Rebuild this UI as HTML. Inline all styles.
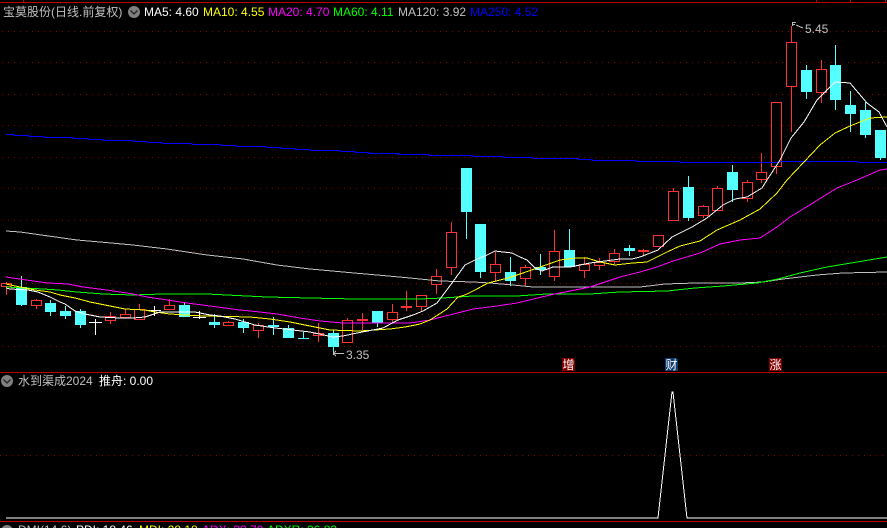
<!DOCTYPE html>
<html>
<head>
<meta charset="utf-8">
<style>
html,body{margin:0;padding:0;background:#000;width:887px;height:528px;overflow:hidden}
svg{display:block;position:absolute;left:0;top:0}
text{font-family:"Liberation Sans","WenQuanYi Zen Hei","Noto Sans CJK SC",sans-serif;font-size:12px}
.c{shape-rendering:crispEdges}
.l{fill:none;stroke-width:1;shape-rendering:crispEdges}
</style>
</head>
<body>
<svg width="887" height="528" viewBox="0 0 887 528" xmlns="http://www.w3.org/2000/svg">
<rect width="887" height="528" fill="#000"/>
<!-- frame -->
<g class="c" stroke="#c00000" fill="none">
<path d="M0 2.5H887M23.5 0V2M816.5 0V2M850.5 0V2M885.5 0V2M0 372.5H887M0 521.5H887"/>
</g>
<!-- grid -->
<path class="c" fill="none" stroke="#900000" stroke-dasharray="1 5" d="M2 31.5H887M2 62.5H887M2 94.5H887M2 125.5H887M2 157.5H887M2 188.5H887M2 220.5H887M2 251.5H887M2 283.5H887M2 314.5H887M2 346.5H887M0 455.5H887"/>

<!-- wicks -->
<path class="c" fill="none" stroke="#54ffff" d="M21.5 276V306M50.5 300V316M65.5 306V319M80.5 309V328M184.5 303V317M214.5 314V328M243.5 319V333M273.5 317V335M288.5 325V338M303.5 332V339M333.5 330V355M377.5 311V327M466.5 168V239M480.5 224V278M510.5 257V286M540.5 254V275M569.5 229V267M629.5 245V256M688.5 176V221M732.5 165V202M806.5 65V99M835.5 45V110M850.5 91V132M865.5 102V138M880.5 130V160"/>
<path class="c" fill="none" stroke="#ff3232" d="M6.5 282V295M36.5 299V309M110.5 312V324M125.5 309V318M139.5 304V320M169.5 299V310M228.5 321V326M258.5 323V338M318.5 323V342M347.5 318V343M362.5 313V330M392.5 304V323M406.5 291V311M421.5 295V311M436.5 269V294M451.5 222V275M495.5 252V282M525.5 265V286M554.5 230V281M584.5 257V278M599.5 258V270M614.5 249V264M643.5 249V255M673.5 188V221M703.5 205V218M717.5 186V211M747.5 180V202M761.5 153V183M776.5 102V174M791.5 26V132M821.5 60V103"/>
<path class="c" fill="none" stroke="#ffffff" d="M95.5 319V335M154.5 306V316M199.5 311V319M89 322.5H102M148 310.5H161M193 317.5H206"/>

<!-- hollow red bodies -->
<path class="c" fill="#000" stroke="#ff3232" d="M1.5 283.5h10v3h-10zM31.5 300.5h10v5h-10zM105.5 316.5h10v4h-10zM120.5 314.5h10v3h-10zM134.5 309.5h10v10h-10zM164.5 305.5h10v4h-10zM223.5 322.5h10v3h-10zM253.5 325.5h10v5h-10zM313.5 333.5h10v2h-10zM342.5 320.5h10v22h-10zM387.5 312.5h10v7h-10zM401.5 306.5h10v1h-10zM416.5 295.5h10v11h-10zM431.5 276.5h10v8h-10zM446.5 232.5h10v35h-10zM490.5 264.5h10v8h-10zM520.5 267.5h10v11h-10zM549.5 251.5h10v25h-10zM579.5 264.5h10v6h-10zM594.5 262.5h10v3h-10zM609.5 253.5h10v8h-10zM653.5 235.5h10v11h-10zM668.5 191.5h10v29h-10zM698.5 206.5h10v9h-10zM712.5 188.5h10v22h-10zM742.5 182.5h10v16h-10zM756.5 172.5h10v7h-10zM771.5 102.5h10v64h-10zM786.5 42.5h10v44h-10zM816.5 69.5h10v23h-10z"/>
<!-- solid red -->
<path class="c" fill="#ff3232" d="M357 319h11v2h-11zM638 250h11v2h-11z"/>
<!-- cyan bodies -->
<path class="c" fill="#54ffff" d="M16 287h11v18h-11zM45 303h11v9h-11zM60 311h11v5h-11zM75 311h11v14h-11zM179 305h11v12h-11zM209 322h11v3h-11zM238 322h11v6h-11zM268 325h11v2h-11zM283 328h11v10h-11zM298 338h11v1h-11zM328 333h11v14h-11zM372 311h11v12h-11zM461 168h11v44h-11zM475 224h11v48h-11zM505 272h11v9h-11zM535 267h11v3h-11zM564 250h11v17h-11zM624 248h11v3h-11zM683 187h11v31h-11zM727 172h11v18h-11zM801 70h11v22h-11zM830 65h11v35h-11zM845 105h11v9h-11zM860 110h11v25h-11zM875 130h11v28h-11z"/>

<!-- MA250 -->
<path class="c" fill="none" stroke="#0000ff" d="M6 134.5H14V135.5H29V136.5H44V137.5H73V138.5H88V139.5H103V140.5H133V141.5H147V142.5H162V143.5H192V144.5H221V145.5H236V146.5H266V147.5H281V148.5H295V149.5H310V150.5H340V151.5H355V152.5H369V153.5H399V154.5H429V155.5H473V156.5H503V157.5H533V158.5H578V159.5H592V160.5H636V161.5H680V162.5H780V161.5H858V162.5H887"/>
<!-- MA120 -->
<polyline class="l" stroke="#c0c0c0" points="6,231 20,232 77,240 100,242 133,245 167,249 187,252 207,255 243,259 277,265 310,269 343,272 377,275 410,278 440,281 473,282 490,283 513,285 533,287 620,287 640,287 665,284 695,283 740,283 763,282 783,279 817,275 843,273 887,272"/>
<!-- MA60 -->
<polyline class="l" stroke="#00ff00" points="6,287 25,288 43,289 58,290 77,292 103,294 133,295 162,294 207,294 267,297 310,298 355,299 420,299 443,298 473,296 517,296 547,294 590,294 620,292 667,291 695,288 723,286 757,283 778,279 800,273 827,267 857,262 887,257"/>
<!-- MA20 -->
<polyline class="l" stroke="#ff00ff" points="6,277 33,281 48,283 68,284 83,287 107,290 133,294 147,297 167,300 187,303 210,306 240,310 260,312 277,314 300,318 320,321 343,323 410,323 430,320 473,309 497,306 517,303 550,295 590,287 620,277 640,272 657,267 673,261 700,253 720,244 740,240 760,238 777,227 790,217 813,203 837,188 857,180 880,170 887,169"/>
<!-- MA10 -->
<polyline class="l" stroke="#ffff00" points="6,284 20,287 35,290 50,292 60,295 75,298 90,302 110,306 125,309 145,310 155,312 170,314 185,315 205,316 250,317 270,319 290,322 310,326 330,330 360,331 375,330 390,329 405,327 420,324 430,320 447,309 458,297 465,295 475,290 488,283 508,278 523,273 543,266 560,260 577,258 587,258 600,262 615,265 633,263 647,262 653,259 667,252 680,246 700,241 717,230 740,220 760,209 777,193 787,180 804,162 820,145 835,133 850,126 870,118 887,117"/>
<!-- MA5 -->
<polyline class="l" stroke="#ffffff" points="6,288 10,289 28,290 38,292 50,297 60,302 65,304 75,311 85,314 100,317 120,318 133,318 145,317 160,312 175,312 195,312 210,315 220,316 235,319 255,325 275,328 293,330 310,332 333,337 343,336 357,333 373,330 383,328 398,320 413,315 423,311 437,303 452,283 465,265 475,260 487,255 495,251 503,252 512,253 520,257 527,260 535,268 542,271 553,267 570,267 580,265 590,263 620,259 632,259 640,257 658,250 672,237 692,227 707,218 723,205 735,199 747,197 762,188 767,180 780,160 791,138 804,122 817,100 835,82 850,83 867,103 879,112 887,127"/>

<!-- high/low markers -->
<path class="c" fill="none" stroke="#c0c0c0" d="M792.5 22V26M792.5 22.5H796M792.5 24.5H795M796 25L803 28"/>
<text x="805" y="33" fill="#c0c0c0">5.45</text>
<path class="c" fill="none" stroke="#c0c0c0" d="M333 353.5H344M333 353.5L336 351M333 353.5L336 356"/>
<text x="346" y="359" fill="#c0c0c0">3.35</text>

<!-- title row -->
<text x="3" y="16" fill="#c0c0c0">宝莫股份(日线.前复权)</text>
<circle cx="134" cy="12" r="6" fill="#808080"/>
<path d="M130.5 10.5L134 14L137.5 10.5" fill="none" stroke="#222" stroke-width="1.3"/>
<text x="144" y="16" fill="#ffffff">MA5: 4.60</text>
<text x="203" y="16" fill="#ffff00">MA10: 4.55</text>
<text x="268" y="16" fill="#ff00ff">MA20: 4.70</text>
<text x="333" y="16" fill="#00ff00">MA60: 4.11</text>
<text x="398" y="16" fill="#c0c0c0">MA120: 3.92</text>
<text x="470" y="16" fill="#0000ff">MA250: 4.52</text>

<!-- event labels -->
<path class="c" fill="#800000" d="M562 358h12v1h1v12h-13z"/>
<path class="c" fill="#0a3a6e" d="M665 358h12v1h1v12h-13z"/>
<path class="c" fill="#800000" d="M769 358h12v1h1v12h-13z"/>
<text x="562.5" y="369" fill="#fff">增</text>
<text x="665.5" y="369" fill="#fff">财</text>
<text x="769.5" y="369" fill="#fff">涨</text>

<!-- indicator panel -->
<circle cx="7" cy="381" r="6" fill="#808080"/>
<path d="M3.5 379.5L7 383L10.5 379.5" fill="none" stroke="#222" stroke-width="1.3"/>
<text x="18" y="385" fill="#c0c0c0">水到渠成2024</text>
<text x="99" y="385" fill="#ffffff">推舟: 0.00</text>
<polyline class="l" stroke="#ffffff" points="6,518 658,518 672,392 673,392 687,518 887,518"/>

<!-- clipped bottom row -->
<circle cx="7" cy="531" r="6" fill="#808080"/>
<text x="18" y="534" fill="#c0c0c0">DMI(14,6)</text>
<text x="76" y="534" fill="#ffffff">PDI: 18.46</text>
<text x="139" y="534" fill="#ffff00">MDI: 28.18</text>
<text x="202" y="534" fill="#ff00ff">ADX: 32.78</text>
<text x="267" y="534" fill="#00ff00">ADXR: 26.83</text>
</svg>
</body>
</html>
